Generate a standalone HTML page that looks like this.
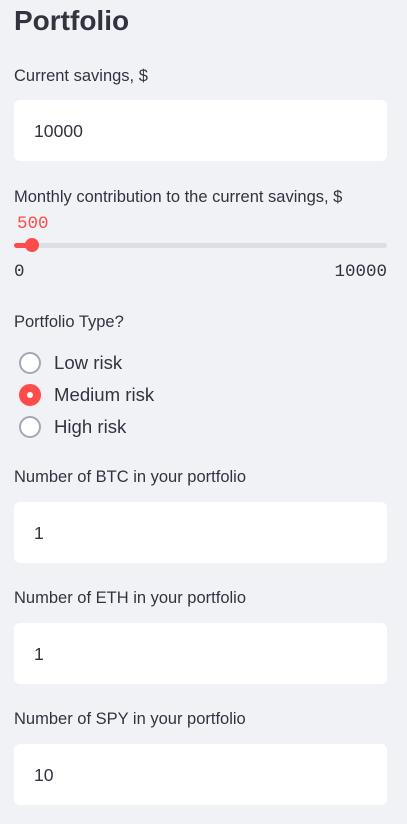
<!DOCTYPE html><html><head><style>
body{margin:0;width:407px;height:824px;background:#f0f2f6;font-family:"Liberation Sans",sans-serif;color:#31333f;position:relative;overflow:hidden}
.a{position:absolute;white-space:nowrap}
.t{left:14px;top:4px;font-size:28px;font-weight:bold;line-height:34px}
.l{left:14px;font-size:16.5px;line-height:20px}
.in{position:absolute;left:14px;width:373px;height:61px;background:#fff;border-radius:6px}
.in span{position:absolute;left:20px;top:20px;font-size:17.6px;line-height:22px}
.m{font-family:"Liberation Mono",monospace;font-size:17.5px}
.rc{position:absolute;left:19px;width:18px;height:18px;border:2px solid #a3a8b4;border-radius:50%;background:#fff}
.rl{left:54px;font-size:18.6px;line-height:22px}
</style></head><body>
<div class="a t">Portfolio</div>
<div class="a l" style="top:66px">Current savings, $</div>
<div class="in" style="top:100px"><span>10000</span></div>
<div class="a l" style="top:187px">Monthly contribution to the current savings, $</div>
<div class="a m" style="left:17px;top:214px;color:#ff4b4b">500</div>
<div class="a" style="left:14px;top:243px;width:373px;height:5px;background:#dcdee6;border-radius:3px"></div>
<div class="a" style="left:14px;top:243px;width:18px;height:5px;background:#ff4b4b;border-radius:3px"></div>
<div class="a" style="left:25px;top:238px;width:14px;height:14px;background:#ff4b4b;border-radius:50%"></div>
<div class="a m" style="left:14px;top:262px">0</div>
<div class="a m" style="right:20px;top:262px">10000</div>
<div class="a l" style="top:312px">Portfolio Type?</div>
<div class="rc" style="top:352px"></div>
<div class="a rl" style="top:352px">Low risk</div>
<div class="rc" style="top:384px;border-color:#ff4b4b;background:#ff4b4b"><div style="position:absolute;left:6px;top:6px;width:6px;height:6px;background:#fff;border-radius:50%"></div></div>
<div class="a rl" style="top:384px">Medium risk</div>
<div class="rc" style="top:416px"></div>
<div class="a rl" style="top:416px">High risk</div>
<div class="a l" style="top:467px">Number of BTC in your portfolio</div>
<div class="in" style="top:502px"><span>1</span></div>
<div class="a l" style="top:588px">Number of ETH in your portfolio</div>
<div class="in" style="top:623px"><span>1</span></div>
<div class="a l" style="top:709px">Number of SPY in your portfolio</div>
<div class="in" style="top:744px"><span>10</span></div>
</body></html>
